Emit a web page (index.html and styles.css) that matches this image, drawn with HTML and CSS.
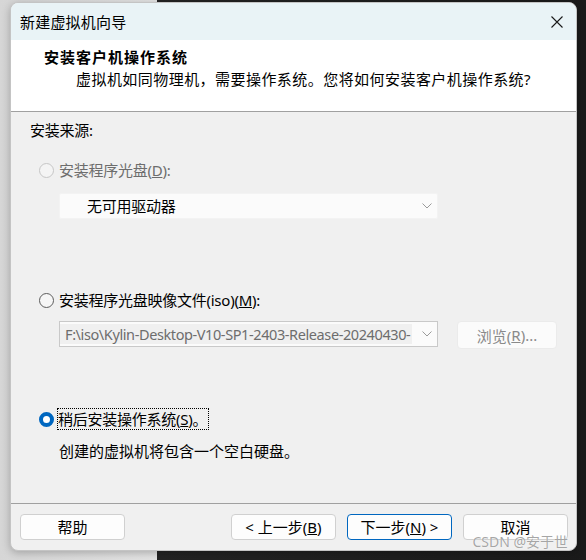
FILE: index.html
```html
<!DOCTYPE html>
<html lang="zh-CN">
<head>
<meta charset="utf-8">
<title>新建虚拟机向导</title>
<link rel="stylesheet" href="styles.css">
</head>
<body>
<div class="window">
  <div class="titlebar">
    <span class="title">新建虚拟机向导</span>
    <svg class="close" width="12" height="12" viewBox="0 0 12 12"><path d="M0.5 0.5 L11.5 11.5 M11.5 0.5 L0.5 11.5" stroke="#1a1a1a" stroke-width="1.1" fill="none"/></svg>
  </div>
  <div class="header">
    <div class="h-title">安装客户机操作系统</div>
    <div class="h-sub">虚拟机如同物理机，需要操作系统。您将如何安装客户机操作系统?</div>
  </div>
  <div class="content">
    <div class="label">安装来源:</div>
    <div class="radio-row row1 disabled">
      <span class="radio radio-disabled"></span>
      <span class="rtext">安装程序光盘(<u>D</u>):</span>
    </div>
    <div class="combo combo1">
      <span class="combo-text">无可用驱动器</span>
      <svg class="chev" width="10" height="6" viewBox="0 0 10 6"><polyline points="0.5,0.5 5,5 9.5,0.5" stroke="#9a9a9a" fill="none" stroke-width="1"/></svg>
    </div>
    <div class="radio-row row2">
      <span class="radio"></span>
      <span class="rtext">安装程序光盘映像文件(iso)(<u>M</u>):</span>
    </div>
    <div class="iso-row">
      <div class="combo combo2">
        <span class="combo-text path">F:\iso\Kylin-Desktop-V10-SP1-2403-Release-20240430-</span>
        <svg class="chev" width="10" height="6" viewBox="0 0 10 6"><polyline points="0.5,0.5 5,5 9.5,0.5" stroke="#9a9a9a" fill="none" stroke-width="1"/></svg>
      </div>
      <div class="browse">浏览(<u>R</u>)...</div>
    </div>
    <div class="radio-row row3">
      <span class="radio radio-checked"></span>
      <span class="rtext focus">稍后安装操作系统(<u>S</u>)。</span>
    </div>
    <div class="desc">创建的虚拟机将包含一个空白硬盘。</div>
  </div>
  <div class="footer">
    <button class="btn help">帮助</button>
    <button class="btn">&lt; 上一步(<u>B</u>)</button>
    <button class="btn primary">下一步(<u>N</u>) &gt;</button>
    <button class="btn">取消</button>
  </div>
  <div class="watermark">CSDN @安于世</div>
</div>
</body>
</html>
```

FILE: styles.css
```css
html, body {
  margin: 0;
  height: 100%;
}
body {
  width: 586px;
  height: 560px;
  overflow: hidden;
  box-sizing: border-box;
  padding: 2px 0 0 10px;
  background: linear-gradient(to right, #d6d6d6 0, #e4e4e4 157px, #232323 157px, #1a1a1a 100%);
  font-family: "Noto Sans", "Noto Sans CJK SC", sans-serif;
  font-size: 15px;
  color: #000;
}
.window {
  position: relative;
  width: 567px;
  height: 549px;
  box-sizing: border-box;
  background: #f0f0f0;
  border: 1px solid #c4c4c4;
  border-radius: 8px;
  overflow: hidden;
  display: flex;
  flex-direction: column;
  box-shadow: 0 2px 8px rgba(0,0,0,0.25);
}
.titlebar {
  height: 37px;
  flex: none;
  background: #e9f3f6;
  display: flex;
  align-items: center;
  justify-content: space-between;
  padding: 0 13px 0 9px;
}
.title {
  font-size: 15px;
  letter-spacing: 0.2px;
  line-height: 20px;
}
.close {
  display: block;
}
.header {
  flex: none;
  height: 72px;
  box-sizing: border-box;
  background: #ffffff;
  border-bottom: 1px solid #a0a0a0;
  padding: 7px 0 0 33px;
}
.h-title {
  font-weight: bold;
  font-size: 15px;
  line-height: 20px;
  letter-spacing: 1px;
}
.h-sub {
  margin-left: 32px;
  margin-top: 2px;
  line-height: 20px;
  font-size: 15px;
  letter-spacing: 0.45px;
}
.content {
  flex: 1;
  padding: 8px 0 0 19px;
  border-bottom: 1px solid #a0a0a0;
  letter-spacing: -0.25px;
}
.label {
  line-height: 20px;
}
.radio-row {
  display: flex;
  align-items: center;
  height: 20px;
  padding-left: 9px;
  gap: 5px;
}
.row1 { margin-top: 20px; }
.row2 { margin-top: 71px; }
.row3 { margin-top: 60px; }
.disabled .rtext { color: #6d6d6d; }
.radio {
  width: 13px;
  height: 13px;
  border-radius: 50%;
  border: 1px solid #5c5c5c;
  background: #f6f6f6;
  flex: none;
}
.radio-disabled {
  border-color: #c6c6c6;
  background: #f4f4f4;
}
.radio-checked {
  width: 7px;
  height: 7px;
  border: 4px solid #0067c0;
  background: #ffffff;
}
.rtext {
  line-height: 20px;
  white-space: nowrap;
}
.focus {
  outline: 1px dotted #000;
  outline-offset: 0;
  padding: 0 1px 0 0;
  margin-left: -1px;
}
.combo {
  box-sizing: border-box;
  width: 379px;
  display: flex;
  align-items: center;
  justify-content: space-between;
  overflow: hidden;
}
.combo1 {
  margin: 13px 0 0 29px;
  height: 26px;
  background: #fbfbfb;
  border: 1px solid #f3f3f3;
  padding: 0 5px 0 27px;
  border-radius: 2px;
}
.combo-text {
  line-height: 20px;
  white-space: nowrap;
}
.iso-row {
  display: flex;
  align-items: flex-start;
  gap: 19px;
  margin: 11px 0 0 29px;
}
.combo2 {
  height: 26px;
  background: #fbfbfb;
  border: 1px solid #c9c9c9;
  padding: 0 5px 0 0;
}
.path {
  flex: 1;
  min-width: 0;
  overflow: hidden;
  background: #f0f0f0;
  color: #6d6d6d;
  padding-left: 5px;
  margin-right: 10px;
  letter-spacing: -0.4px;
  font-size: 14.5px;
}
.chev { display: block; flex: none; }
.browse {
  box-sizing: border-box;
  width: 100px;
  height: 28px;
  background: #fbfbfb;
  border: 1px solid #ebebeb;
  border-radius: 4px;
  color: #8a8a8a;
  display: flex;
  align-items: center;
  justify-content: center;
  letter-spacing: 0;
}
.desc {
  margin-top: 12px;
  margin-left: 29px;
  line-height: 20px;
  letter-spacing: 0;
}
.footer {
  flex: none;
  height: 46px;
  box-sizing: border-box;
  padding: 10px 8px 0 9px;
  display: flex;
  gap: 11px;
}
.btn {
  box-sizing: border-box;
  width: 105px;
  height: 26px;
  background: #fdfdfd;
  border: 1px solid #d0d0d0;
  border-radius: 4px;
  font-family: "Noto Sans", "Noto Sans CJK SC", sans-serif;
  font-size: 15px;
  color: #000;
  padding: 0;
  line-height: 20px;
}
.help { margin-right: auto; }
.primary {
  border-color: #0067c0;
}
.watermark {
  position: absolute;
  right: 8px;
  bottom: 0;
  font-size: 14px;
  line-height: 16px;
  color: rgba(150,150,150,0.85);
  text-shadow: 0 0 1px #fff;
  letter-spacing: 0;
}
```
